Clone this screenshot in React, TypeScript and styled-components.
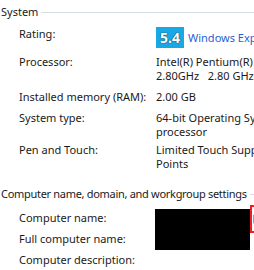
import React from "react";
import styled, { createGlobalStyle } from "styled-components";

const GlobalStyle = createGlobalStyle`
  html, body {
    margin: 0;
    padding: 0;
    background: #ffffff;
    overflow: hidden;
  }
  body {
    font-family: "Noto Sans", "Open Sans", sans-serif;
    font-size: 11px;
    color: #1a1a1a;
  }
`;

const Page = styled.div`
  width: 254px;
  height: 270px;
  overflow: hidden;
  position: relative;
`;

const Section = styled.section<{ $top: number }>`
  padding-top: ${p => p.$top}px;
  display: flex;
  flex-direction: column;
`;

const SectionHeader = styled.div<{ $tight?: boolean }>`
  display: flex;
  align-items: center;
  gap: 3px;
  height: 14px;
  line-height: 14px;
  padding-left: 1px;
  white-space: nowrap;
  letter-spacing: ${p => (p.$tight ? "-0.3px" : "0")};
`;

const HeaderRule = styled.div`
  flex: 1;
  min-width: 8px;
  height: 1px;
  background: #d6dde3;
  margin-top: 1px;
`;

const Row = styled.div<{ $gap: number }>`
  display: grid;
  grid-template-columns: 137px 1fr;
  padding-left: 19px;
  margin-top: ${p => p.$gap}px;
  line-height: 14px;
  align-items: start;
`;

const Label = styled.div<{ $offset?: number }>`
  white-space: nowrap;
  padding-top: ${p => p.$offset ?? 0}px;
`;

const Value = styled.div`
  white-space: nowrap;
`;

const RatingWrap = styled.div`
  display: flex;
  align-items: center;
  gap: 4px;
  white-space: nowrap;
`;

const Score = styled.div`
  width: 28px;
  height: 21px;
  background: #19a7e6;
  color: #ffffff;
  font-weight: 700;
  font-size: 14px;
  line-height: 21px;
  text-align: center;
  text-shadow: 0 0 1px #1b3b55, 0 0 1px #1b3b55;
`;

const Link = styled.span`
  color: #1f5fd6;
`;

const ComputerGrid = styled.div`
  display: grid;
  grid-template-columns: 136px 95px 1fr;
  grid-template-rows: 21px 21px 21px;
  padding-left: 19px;
  margin-top: 8px;
  line-height: 14px;
`;

const GridLabel = styled.div<{ $row: number }>`
  grid-column: 1;
  grid-row: ${p => p.$row};
  white-space: nowrap;
  padding-top: 2px;
`;

const Redacted = styled.div`
  grid-column: 2;
  grid-row: 1 / span 2;
  height: 41px;
  background: #000000;
`;

const Highlight = styled.div`
  grid-column: 3;
  grid-row: 1 / span 2;
  margin-top: -4px;
  height: 24px;
  width: 10px;
  border: 2px solid #ee1c24;
  border-right: none;
  display: flex;
  align-items: center;
  padding-left: 1px;
`;

const Shield = () => (
  <svg width="6" height="10" viewBox="0 0 6 10">
    <rect x="0" y="0" width="6" height="10" rx="2" fill="#8aa6c4" />
    <rect x="1" y="1" width="4" height="5" fill="#d9e6f2" />
  </svg>
);

export default function App() {
  return (
    <Page>
      <GlobalStyle />
      <Section $top={5}>
        <SectionHeader>
          System
          <HeaderRule />
        </SectionHeader>
        <Row $gap={8}>
          <Label>Rating:</Label>
          <RatingWrap>
            <Score>5.4</Score>
            <Link>Windows Experience Index</Link>
          </RatingWrap>
        </Row>
        <Row $gap={7}>
          <Label>Processor:</Label>
          <Value>
            Intel(R) Pentium(R) CPU G640 @
            <br />
            2.80GHz&nbsp;&nbsp; 2.80 GHz
          </Value>
        </Row>
        <Row $gap={7}>
          <Label>Installed memory (RAM):</Label>
          <Value>2.00 GB</Value>
        </Row>
        <Row $gap={7}>
          <Label>System type:</Label>
          <Value>
            64-bit Operating System, x64-based
            <br />
            processor
          </Value>
        </Row>
        <Row $gap={4}>
          <Label>Pen and Touch:</Label>
          <Value>
            Limited Touch Support with 10 Touch
            <br />
            Points
          </Value>
        </Row>
      </Section>
      <Section $top={16}>
        <SectionHeader $tight>
          Computer name, domain, and workgroup settings
          <HeaderRule />
        </SectionHeader>
        <ComputerGrid>
          <GridLabel $row={1}>Computer name:</GridLabel>
          <Redacted />
          <Highlight>
            <Shield />
          </Highlight>
          <GridLabel $row={2}>Full computer name:</GridLabel>
          <GridLabel $row={3}>Computer description:</GridLabel>
        </ComputerGrid>
      </Section>
    </Page>
  );
}
